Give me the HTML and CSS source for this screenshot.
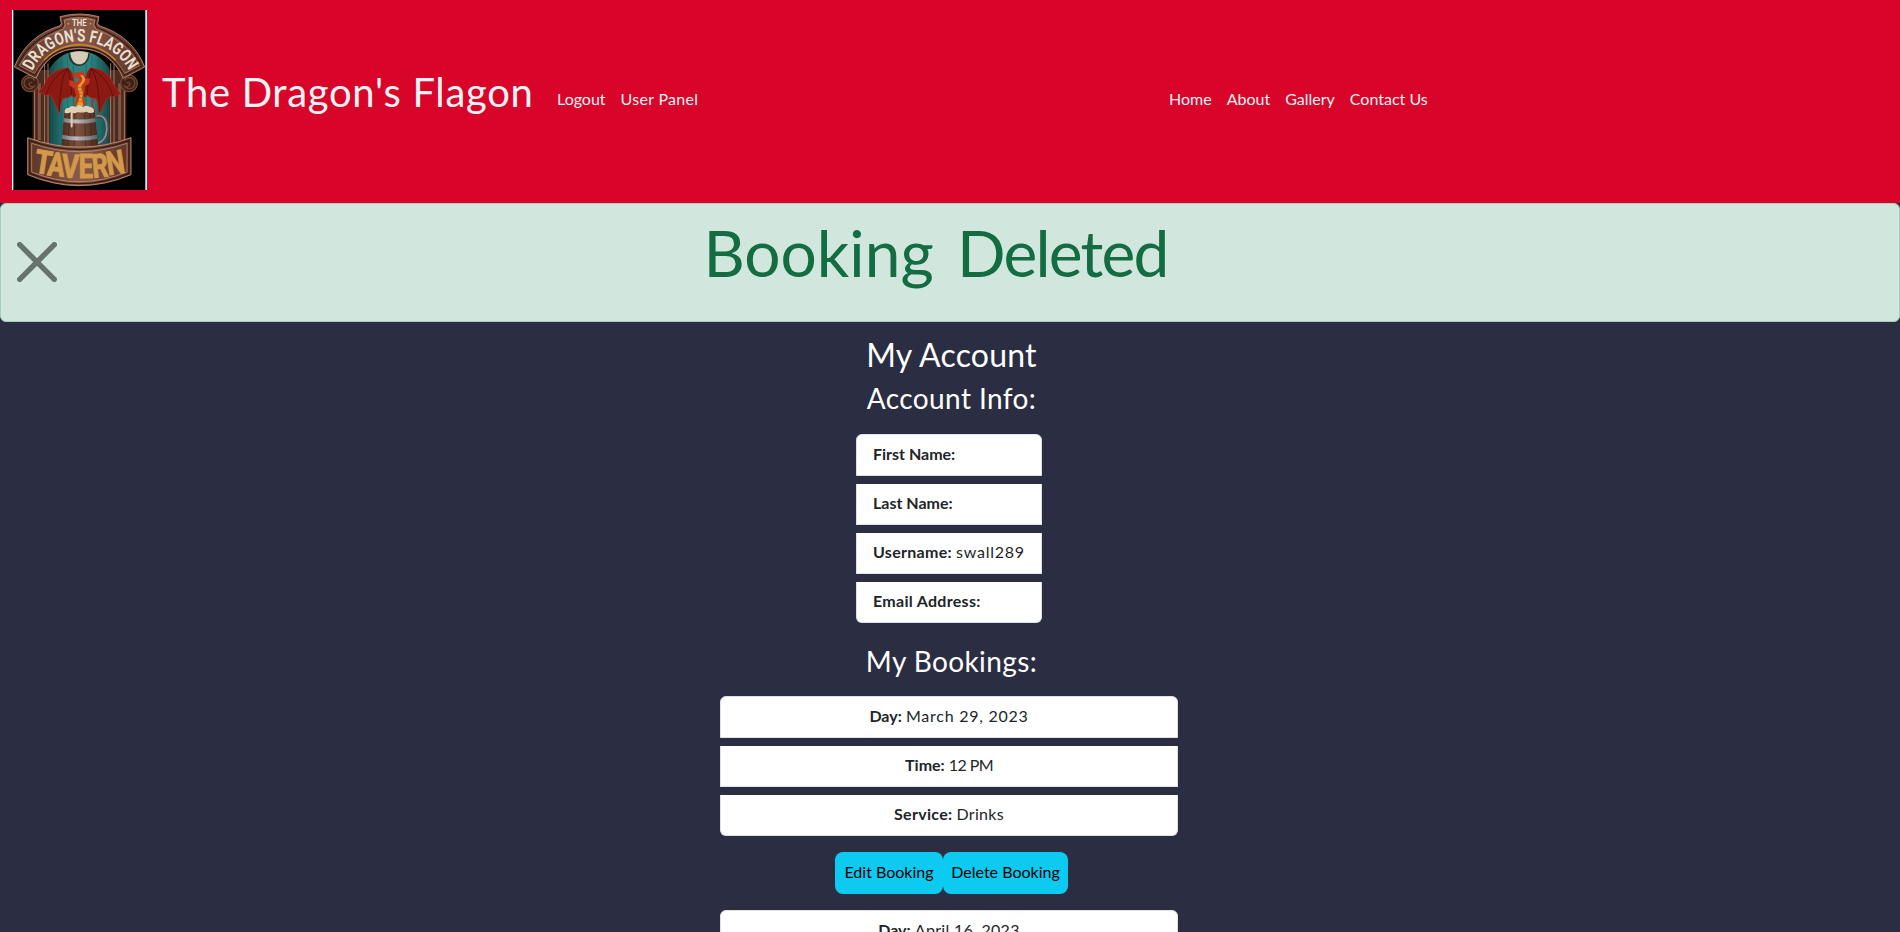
FILE: index.html
```html
<!DOCTYPE html>
<html lang="en">
<head>
<meta charset="utf-8">
<title>The Dragon's Flagon</title>
<link rel="stylesheet" href="styles.css">
</head>
<body>
<header class="navbar">
  <svg class="logo" viewBox="36 30 405 540" preserveAspectRatio="none" aria-label="The Dragon's Flagon Tavern">
    <defs>
      <linearGradient id="wood" x1="0" x2="1" y1="0" y2="0"><stop offset="0" stop-color="#5b3326"/><stop offset=".5" stop-color="#8a5a48"/><stop offset="1" stop-color="#5b3326"/></linearGradient>
      <linearGradient id="barrel" x1="0" x2="1" y1="0" y2="0"><stop offset="0" stop-color="#4a2a1e"/><stop offset=".45" stop-color="#80523e"/><stop offset="1" stop-color="#45271c"/></linearGradient>
      <linearGradient id="steel" x1="0" x2="1" y1="0" y2="0"><stop offset="0" stop-color="#6c6f76"/><stop offset=".4" stop-color="#b9bcc2"/><stop offset="1" stop-color="#5e6066"/></linearGradient>
      <linearGradient id="teal" x1="0" x2="1" y1="0" y2="0"><stop offset="0" stop-color="#134b49"/><stop offset=".3" stop-color="#2a8580"/><stop offset=".7" stop-color="#2a8580"/><stop offset="1" stop-color="#134b49"/></linearGradient>
      <path id="arc" d="M97 214C150 94 325 94 388 214"/>
    </defs>
    <rect x="36" y="30" width="405" height="540" fill="#fff"/>
    <rect x="40" y="30" width="396" height="540" fill="#000"/>
    <!-- pillars and scrolls -->
    <path d="M98 210H150V440H98ZM327 210H379V440H327Z" fill="#4b2a20"/>
    <path d="M104 240V420M134 190V430M144 190V430M332 190V430M342 190V430M373 240V420" stroke="#c08a6e" stroke-width="2.5"/>
    <path d="M118 250V420M359 250V420" stroke="#83543f" stroke-width="9"/>
    <g fill="#3c2119" stroke="#73462f" stroke-width="4">
      <circle cx="90" cy="250" r="25"/><circle cx="387" cy="250" r="25"/>
      <path d="M104 241a17 17 0 1 0 0 17q-12 7-17-5q2-9 10-4M373 241a17 17 0 1 1 0 17q12 7 17-5q-2-9-10-4" fill="none"/>
    </g>
    <!-- teal doorway with moon -->
    <path d="M149 440V205Q185 153 238 153Q293 153 328 205V440Z" fill="url(#teal)"/>
    <path d="M167 190V440M185 175V440M203 165V440M220 190V440M258 190V440M276 165V440M294 175V440M311 190V440" stroke="#17615e" stroke-width="2"/>
    <path d="M203 160a34 40 0 0 0 68 0" fill="#183f3d" stroke="#5f8f88" stroke-width="2"/>
    <path d="M211 158a27 35 0 0 0 54 0Q238 149 211 158Z" fill="#d8ccb9"/>
    <!-- arched name board -->
    <path d="M43 201Q80 108 180 77L184 70L180 50Q238 34 297 50L293 70L297 77Q398 108 434 201L370 235Q330 146 238 146Q147 146 108 235Z" fill="url(#wood)" stroke="#c79276" stroke-width="2.5"/>
    <path d="M52 198Q88 118 186 83L191 73L187 56Q238 41 290 56L286 73L291 83Q389 118 425 198L373 226Q328 141 238 141Q150 141 104 226Z" fill="none" stroke="#3a1d17" stroke-width="4"/>
    <path d="M58 197Q95 124 190 87L196 75L193 61Q238 47 284 61L281 75L287 87Q383 124 418 197L374 220" fill="none" stroke="#c79276" stroke-width="2"/>
    <path d="M58 197L104 220Q150 137 238 137Q328 137 374 220" fill="none" stroke="#b57c62" stroke-width="2"/>
    <path d="M132 180Q178 134 238 134Q302 134 347 181" fill="none" stroke="#d28a2c" stroke-width="4"/>
    <circle cx="205" cy="71" r="2.5" fill="#d99a3d"/><circle cx="271" cy="71" r="2.5" fill="#d99a3d"/>
    <text class="logo-the" x="238" y="78" text-anchor="middle" textLength="44" lengthAdjust="spacingAndGlyphs">THE</text>
    <text class="logo-name"><textPath href="#arc" startOffset="1" textLength="358" lengthAdjust="spacingAndGlyphs">DRAGON'S FLAGON</textPath></text>
    <!-- barrel mug -->
    <path d="M289 351Q326 345 323 391Q320 428 290 436" fill="none" stroke="#3f4a50" stroke-width="12"/>
    <path d="M289 348Q322 342 320 391Q317 424 290 431" fill="none" stroke="#8b9096" stroke-width="5"/>
    <path d="M194 327H284L295 441H184Z" fill="url(#barrel)"/>
    <path d="M209 334L203 440M225 334L222 440M254 334L257 440M270 334L276 440" stroke="#3f2419" stroke-width="2"/>
    <path d="M191 354Q238 363 286 354L288 366Q238 375 190 366ZM186 404Q238 415 291 404L293 416Q238 427 185 416Z" fill="url(#steel)"/>
    <!-- dragon -->
    <path d="M286 334Q266 306 283 296Q301 287 308 304Q311 322 291 315" fill="none" stroke="#a6332a" stroke-width="5"/>
    <g fill="#8d1a12" stroke="#b92d1e" stroke-width="2">
      <path d="M225 270Q222 211 203 203Q163 207 142 235Q134 259 113 278Q127 276 137 287Q151 281 158 296Q167 313 178 344Q180 310 190 295Q207 296 215 286Q221 298 229 287Z"/>
      <path d="M253 270Q254 211 273 203Q314 207 332 235Q342 259 364 284Q348 281 340 291Q325 287 318 300Q310 317 298 344Q297 310 288 296Q269 296 262 286Q256 298 248 287Z"/>
    </g>
    <path d="M203 205Q179 233 178 335M203 205Q156 230 137 285M203 205Q213 238 215 284M273 205Q298 233 298 335M273 205Q321 230 340 289M273 205Q264 238 262 284" stroke="#5e0f0c" stroke-width="3" fill="none"/>
    <path d="M222 218L250 214L256 235L270 236L266 253L252 259L250 294L260 316H222L229 292L226 268L208 256V240L231 247L239 237L218 230Z" fill="#c13a1e"/>
    <path d="M240 226Q252 235 243 247Q230 257 234 270Q243 284 237 296L230 318H250L246 295Q252 279 245 268Q240 258 251 249Q261 236 247 225Z" fill="#e39a2a"/>
    <path d="M233 263H246M235 273H249M237 283H249M236 293H247M233 304H247" stroke="#a8541e" stroke-width="2"/>
    <path d="M194 338Q192 323 207 324Q214 313 226 321Q239 311 249 321Q263 313 269 321Q284 322 282 337Q269 342 260 335Q245 340 233 336Q224 342 218 339V378Q215 388 212 378V337Q202 342 194 338Z" fill="#e0cfb3"/>
    <!-- tavern sign -->
    <path d="M83 413Q238 470 393 413V524Q238 590 83 524Z" fill="url(#wood)" stroke="#d19b7d" stroke-width="2.5"/>
    <path d="M89 422Q238 475 387 422V520Q238 582 89 520Z" fill="none" stroke="#3a1d17" stroke-width="4"/>
    <path d="M95 430Q238 480 381 430V516Q238 574 95 516Z" fill="none" stroke="#d19b7d" stroke-width="2"/>
    <g class="logo-tavern">
      <text transform="translate(100 517) rotate(9) scale(.84 1)">T</text>
      <text transform="translate(140 525) rotate(6) scale(.78 1)">A</text>
      <text transform="translate(184 532) rotate(3) scale(.80 1)">V</text>
      <text transform="translate(236 535) scale(.78 1)">E</text>
      <text transform="translate(279 533) rotate(-5) scale(.76 1)">R</text>
      <text transform="translate(325 526) rotate(-9) scale(.78 1)">N</text>
    </g>
  </svg>
  <a class="brand">The Dragon's Flagon</a>
  <nav class="links account-links"><a>Logout</a><a class="loose">User Panel</a></nav>
  <nav class="links site-links"><a>Home</a><a>About</a><a>Gallery</a><a>Contact Us</a></nav>
</header>
<section class="alert">
  <svg class="close" viewBox="0 0 40 40"><path d="M2.7 2.7L37.3 37.3M37.3 2.7L2.7 37.3"/></svg>
  <h1>Booking <span>Deleted</span></h1>
</section>
<main>
  <h2>My Account</h2>
  <h3>Account Info:</h3>
  <ul class="list info">
    <li><b>First Name:</b></li>
    <li><b>Last Name:</b></li>
    <li><b class="loose">Username:</b> <span class="wide">swall289</span></li>
    <li><b class="loose">Email Address:</b></li>
  </ul>
  <h3 class="bookings-title">My Bookings:</h3>
  <ul class="list booking">
    <li><b>Day:</b> <span class="wide">March 29, 2023</span></li>
    <li><b>Time:</b> <span class="tight">12 PM</span></li>
    <li><b class="loose">Service:</b> <span class="loose">Drinks</span></li>
  </ul>
  <div class="actions"><a>Edit Booking</a><a>Delete Booking</a></div>
  <ul class="list booking">
    <li><b>Day:</b> <span class="loose">April 16, 2023</span></li>
  </ul>
</main>
</body>
</html>
```
FILE: styles.css
```css
* { box-sizing: border-box; }
html { overflow: hidden; }
body {
  margin: 0;
  height: 932px;
  overflow: hidden;
  background: #2b2d42;
  color: #212529;
  font: 16px/24px Lato, "Open Sans", sans-serif;
}
.navbar {
  display: flex;
  align-items: flex-start;
  height: 203px;
  padding: 10px 12px;
  background: #d90429;
  color: #edf2f4;
}
.logo { width: 135px; height: 180px; flex: none; }
.logo text { font-family: "Roboto", sans-serif; font-weight: 700; fill: #e9dfd0; }
.logo .logo-the { font-size: 28px; }
.logo .logo-name { font-size: 52px; }
.logo .logo-tavern text { font-size: 98px; fill: #d3994a; stroke: #d3994a; stroke-width: 3; }
.brand { width: 379px; flex: none; margin: 58px 0 0 15px; font-size: 40px; line-height: 48px; letter-spacing: .68px; white-space: nowrap; }
.links { display: flex; gap: 15px; margin-top: 77px; white-space: nowrap; }
.account-links { width: 628px; padding-left: 16px; }
.tight { letter-spacing: -.6px; }
.loose { letter-spacing: .3px; }
.wide { letter-spacing: .75px; }
.alert {
  display: flex;
  height: 119px;
  border: 1px solid #a3cfbb;
  border-radius: 6px;
  background: #d1e7dd;
  color: #146c43;
}
.close { width: 40px; height: 40px; margin: 38px 0 0 16px; flex: none; }
.close path { fill: none; stroke: #68736e; stroke-width: 5.4; stroke-linecap: round; }
.alert h1 { flex: 1; margin: 10px 88px 0 0; padding-left: 3px; text-align: center; font-size: 64px; line-height: 77px; font-weight: 400; word-spacing: 7px; }
.alert h1 span { letter-spacing: -1.8px; }
main { display: flex; flex-direction: column; align-items: center; padding: 14px 2px 0 0; }
h2, h3 { margin: 0; padding-left: 5px; color: #fff; font-weight: 400; }
h2 { font-size: 32px; line-height: 38px; letter-spacing: .2px; }
h3 { margin-top: 7px; font-size: 28px; line-height: 34px; letter-spacing: .4px; }
.bookings-title { margin: 21px 0 18px; }
.list { display: grid; gap: 8px; margin: 0; padding: 0; list-style: none; }
.list li { height: 41px; padding: 7px 16px; border: 1px solid #dee2e6; border-top: 0; background: #fff; white-space: nowrap; }
.list li:last-child { border-radius: 0 0 6px 6px; }
.list li:first-child { height: 42px; border-top: 1px solid #dee2e6; border-radius: 6px 6px 0 0; }
.info { width: 186px; margin-top: 19px; }
.booking { width: 458px; text-align: center; }
.actions { display: flex; width: 233px; height: 42px; margin: 16px 0 16px 5px; color: #000; text-align: center; line-height: 40px; }
.actions a { border-radius: 8px; background: #0dcaf0; }
.actions a:first-child { width: 108px; }
.actions a:last-child { width: 125px; }
```
